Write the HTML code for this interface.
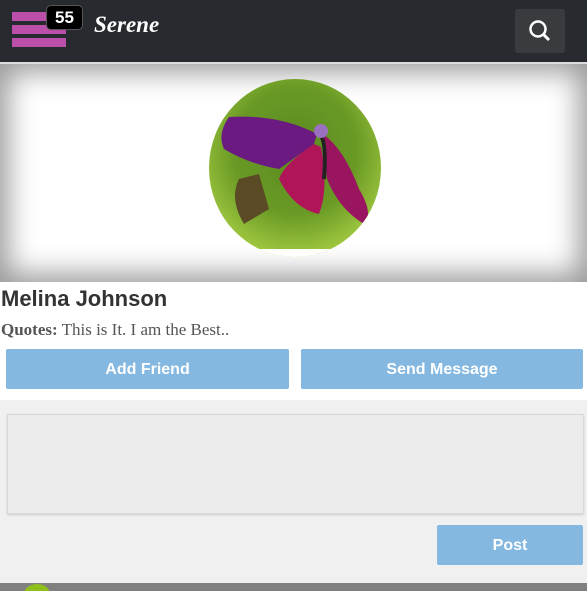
<!DOCTYPE html>
<html><head><style>
*{margin:0;padding:0;box-sizing:border-box}
body{width:587px;height:591px;overflow:hidden;background:#fff;font-family:"Liberation Sans",sans-serif;position:relative}
.hdr{position:absolute;left:0;top:0;width:587px;height:62px;background:#272a2e}
.bar{position:absolute;left:12px;width:54px;height:9px;background:#bb4faa}
.badge{position:absolute;left:46px;top:5px;width:37px;height:25px;background:#000;border:1px solid #555;border-radius:5px;color:#fff;font-weight:bold;font-size:17px;text-align:center;line-height:23px}
.logo{position:absolute;left:94px;top:12px;color:#fff;font-family:"Liberation Serif",serif;font-style:italic;font-weight:bold;font-size:23px}
.srch{position:absolute;left:515px;top:9px;width:50px;height:44px;background:#393b3f;border-radius:3px}
.line{position:absolute;top:62px;left:0;width:587px;height:2px;background:#ddd}
.ban{position:absolute;top:64px;left:0;width:587px;height:218px;background:#fff;box-shadow:inset 0 0 28px 8px #999}
.name{position:absolute;left:1px;top:286px;font-size:22px;font-weight:bold;color:#333}
.q{position:absolute;left:1px;top:320px;font-family:"Liberation Serif",serif;font-size:17px;color:#555}
.btn{position:absolute;background:#84b8e0;color:#fff;font-weight:bold;font-size:16px;text-align:center;line-height:42px;height:40px;border-radius:2px}
.gray{position:absolute;top:400px;left:0;width:587px;height:183px;background:#f0f0f0}
.ta{position:absolute;left:7px;top:414px;width:577px;height:100px;background:#ececec;border:1px solid #d8d8d8;box-shadow:0 1px 2px #ccc}
.foot{position:absolute;top:583px;left:0;width:587px;height:8px;background:#808080;overflow:hidden}
</style></head><body>
<div class="hdr">
<div class="bar" style="top:12px"></div><div class="bar" style="top:25px"></div><div class="bar" style="top:38px"></div>
<div class="badge">55</div>
<div class="logo">Serene</div>
<div class="srch"><svg width="50" height="44" viewBox="0 0 50 44"><circle cx="23" cy="20" r="7.5" fill="none" stroke="#fff" stroke-width="2.5"/><line x1="28.5" y1="25.5" x2="34" y2="31" stroke="#fff" stroke-width="3"/></svg></div>
</div>
<div class="line"></div>
<div class="ban">
<svg style="position:absolute;left:209px;top:15px" width="172" height="178" viewBox="0 0 172 178">
<defs><radialGradient id="g" cx="50%" cy="40%" r="60%"><stop offset="0" stop-color="#5a8a20"/><stop offset="0.6" stop-color="#6a9a25"/><stop offset="1" stop-color="#a0c840"/></radialGradient>
<clipPath id="c"><ellipse cx="86" cy="89" rx="86" ry="89"/></clipPath></defs>
<g clip-path="url(#c)">
<rect width="172" height="178" fill="url(#g)"/>
<path d="M30 100 Q20 120 35 145 L60 130 L50 95Z" fill="#5a4a25"/>
<path d="M108 55 Q70 35 20 38 Q8 55 15 70 Q40 85 70 90 L105 65Z" fill="#6a1a80"/>
<path d="M105 65 Q75 85 70 100 Q85 130 110 135 Q120 110 112 68Z" fill="#b0155a"/>
<path d="M114 55 Q135 70 150 110 Q165 135 155 145 Q130 130 118 100Z" fill="#9a1560"/>
<path d="M110 55 Q118 60 115 100" stroke="#222" stroke-width="4" fill="none"/>
<circle cx="112" cy="52" r="7" fill="#9a70c0"/>
<rect x="0" y="170" width="172" height="10" fill="#fff"/>
</g>
</svg>
</div>
<div class="name">Melina Johnson</div>
<div class="q"><b>Quotes:</b> This is It. I am the Best..</div>
<div class="btn" style="left:6px;top:349px;width:283px">Add Friend</div>
<div class="btn" style="left:301px;top:349px;width:282px">Send Message</div>
<div class="gray"></div>
<div class="ta"></div>
<div class="btn" style="left:437px;top:525px;width:146px">Post</div>
<div class="foot"><div style="position:absolute;left:24px;top:1px;width:26px;height:20px;border-radius:50%;background:#8fbf1a"></div></div>
</body></html>
